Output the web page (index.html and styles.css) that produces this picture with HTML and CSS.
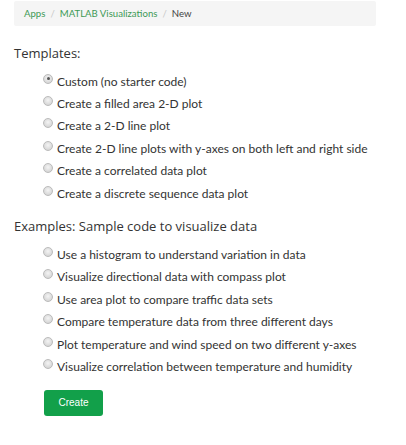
FILE: index.html
```html
<!DOCTYPE html>
<html>
<head>
<meta charset="utf-8">
<link rel="stylesheet" href="styles.css">
</head>
<body>
<div class="page">
  <nav class="crumbs">
    <a class="crumb-link">Apps</a>
    <span class="sep">/</span>
    <a class="crumb-link">MATLAB Visualizations</a>
    <span class="sep">/</span>
    <span class="crumb-current">New</span>
  </nav>

  <h2 class="section-title first">Templates:</h2>
  <ul class="options">
    <li class="option"><span class="radio checked"></span><span>Custom (no starter code)</span></li>
    <li class="option"><span class="radio"></span><span>Create a filled area 2-D plot</span></li>
    <li class="option"><span class="radio"></span><span>Create a 2-D line plot</span></li>
    <li class="option"><span class="radio"></span><span>Create 2-D line plots with y-axes on both left and right side</span></li>
    <li class="option"><span class="radio"></span><span>Create a correlated data plot</span></li>
    <li class="option"><span class="radio"></span><span>Create a discrete sequence data plot</span></li>
  </ul>

  <h2 class="section-title second">Examples: Sample code to visualize data</h2>
  <ul class="options">
    <li class="option"><span class="radio"></span><span>Use a histogram to understand variation in data</span></li>
    <li class="option"><span class="radio"></span><span>Visualize directional data with compass plot</span></li>
    <li class="option"><span class="radio"></span><span>Use area plot to compare traffic data sets</span></li>
    <li class="option"><span class="radio"></span><span>Compare temperature data from three different days</span></li>
    <li class="option"><span class="radio"></span><span>Plot temperature and wind speed on two different y-axes</span></li>
    <li class="option"><span class="radio"></span><span>Visualize correlation between temperature and humidity</span></li>
  </ul>

  <div class="actions">
    <button class="btn-create">Create</button>
  </div>
</div>
</body>
</html>
```

FILE: styles.css
```css
html, body {
  margin: 0;
  padding: 0;
  background: #ffffff;
}
body {
  font-family: "Lato", "Liberation Sans", sans-serif;
  color: #333333;
}
.page {
  padding: 1px 30px 0 14px;
}
.crumbs {
  background: #f5f5f5;
  height: 25px;
  display: flex;
  align-items: center;
  padding-left: 10px;
  font-size: 9.6px;
  border-radius: 2px;
}
.crumb-link {
  color: #3d9a55;
}
.sep {
  color: #c8c8c8;
  margin: 0 5px;
}
.crumb-current {
  color: #444;
}
.section-title {
  font-family: "Open Sans", "Liberation Sans", sans-serif;
  font-weight: 400;
  font-size: 13px;
  color: #333;
  margin: 13px 0 8px 0;
  line-height: 18px;
}
.section-title.first {
  margin-top: 18px;
}
.section-title.second {
  margin-bottom: 8px;
}
.options {
  list-style: none;
  margin: 0;
  padding: 0 0 0 29px;
}
.option {
  display: flex;
  align-items: center;
  height: 22.4px;
  font-size: 12px;
  color: #333;
}
.radio {
  width: 8px;
  height: 8px;
  border-radius: 50%;
  background: radial-gradient(circle at 50% 40%, #f4f4f4 0%, #d8d8d8 70%, #c4c4c4 100%);
  border: 0.5px solid #bbb;
  margin-right: 4px;
  margin-top: -5px;
  flex: none;
  position: relative;
}
.radio.checked::after {
  content: "";
  position: absolute;
  left: 2.5px;
  top: 2.5px;
  width: 3px;
  height: 3px;
  border-radius: 50%;
  background: #555;
}
.actions {
  padding: 12px 0 0 30px;
}
.btn-create {
  background: #12a04a;
  color: #fff;
  border: none;
  border-radius: 3px;
  width: 59px;
  height: 26px;
  font-family: "Liberation Sans", sans-serif;
  font-size: 10px;
  padding: 0;
}
```
